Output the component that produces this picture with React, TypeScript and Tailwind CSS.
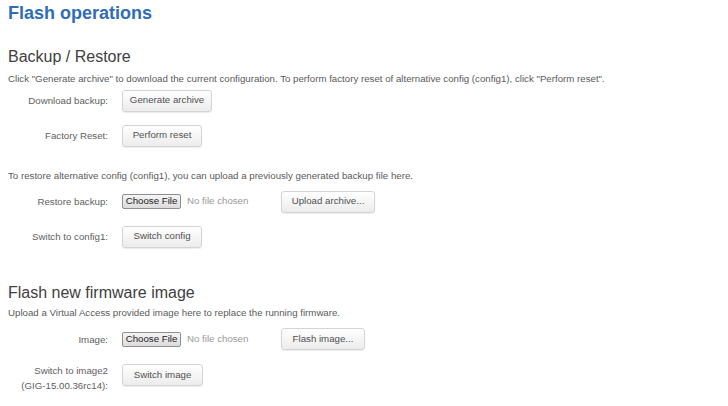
import React from "react";

const font = { fontFamily: '"Liberation Sans", Arial, sans-serif' };

const Btn: React.FC<{ children: React.ReactNode; w: string }> = ({ children, w }) => (
  <button
    className={`h-[22px] ${w} rounded-[3px] border border-[#d4d4d4] bg-gradient-to-b from-white to-[#ececec] text-[9.7px] text-[#505050] shadow-[0_1px_1px_rgba(0,0,0,0.08)]`}
  >
    {children}
  </button>
);

const FileInput: React.FC = () => (
  <div className="flex w-[159px] items-center">
    <span className="flex h-[15px] w-[59px] items-center justify-center rounded-[2px] border border-[#8f8f8f] bg-gradient-to-b from-[#f5f5f5] to-[#dcdcdc] text-[9.7px] text-[#222]">
      Choose File
    </span>
    <span className="ml-[6px] text-[9.7px] text-[#999]">No file chosen</span>
  </div>
);

const Row: React.FC<{ label: React.ReactNode; children: React.ReactNode; h?: string }> = ({
  label,
  children,
  h = "h-[35px]",
}) => (
  <div className={`flex ${h} items-center`}>
    <div className="w-[100px] text-right text-[9.7px] leading-[15px] text-[#606060]">{label}</div>
    <div className="ml-[14px] flex items-center">{children}</div>
  </div>
);

export default function App() {
  return (
    <div className="h-[406px] w-[728px] overflow-hidden bg-white px-[8px]" style={font}>
      <h1 className="pt-[2px] text-[18px] font-bold leading-[22px] text-[#2f6db5]">Flash operations</h1>

      <h2 className="mt-[23px] text-[16px] leading-[20px] text-[#404040]">Backup / Restore</h2>
      <p className="mt-[6px] text-[9.7px] leading-[12px] text-[#5a5a5a]">
        Click "Generate archive" to download the current configuration. To perform factory reset of alternative config
        (config1), click "Perform reset".
      </p>
      <div className="-mt-[2px]">
        <Row label="Download backup:">
          <Btn w="w-[90px]">Generate archive</Btn>
        </Row>
        <Row label="Factory Reset:">
          <Btn w="w-[80px]">Perform reset</Btn>
        </Row>
      </div>

      <p className="mt-[17px] text-[9.7px] leading-[12px] text-[#5a5a5a]">
        To restore alternative config (config1), you can upload a previously generated backup file here.
      </p>
      <div className="mt-[2px]">
        <Row label="Restore backup:">
          <FileInput />
          <Btn w="w-[94px]">Upload archive...</Btn>
        </Row>
        <Row label="Switch to config1:">
          <Btn w="w-[80px]">Switch config</Btn>
        </Row>
      </div>

      <h2 className="mt-[29px] text-[16px] leading-[20px] text-[#404040]">Flash new firmware image</h2>
      <p className="mt-[4px] text-[9.7px] leading-[12px] text-[#5a5a5a]">
        Upload a Virtual Access provided image here to replace the running firmware.
      </p>
      <div className="mt-[4px]">
        <Row label="Image:" h="h-[32px]">
          <FileInput />
          <Btn w="w-[84px]">Flash image...</Btn>
        </Row>
        <div className="mt-[6px] flex items-start">
          <div className="w-[100px] pt-[2px] text-right text-[9.7px] leading-[15px] text-[#606060]">
            Switch to image2
            <br />
            (GIG-15.00.36rc14):
          </div>
          <div className="ml-[14px]">
            <Btn w="w-[81px]">Switch image</Btn>
          </div>
        </div>
      </div>
    </div>
  );
}
